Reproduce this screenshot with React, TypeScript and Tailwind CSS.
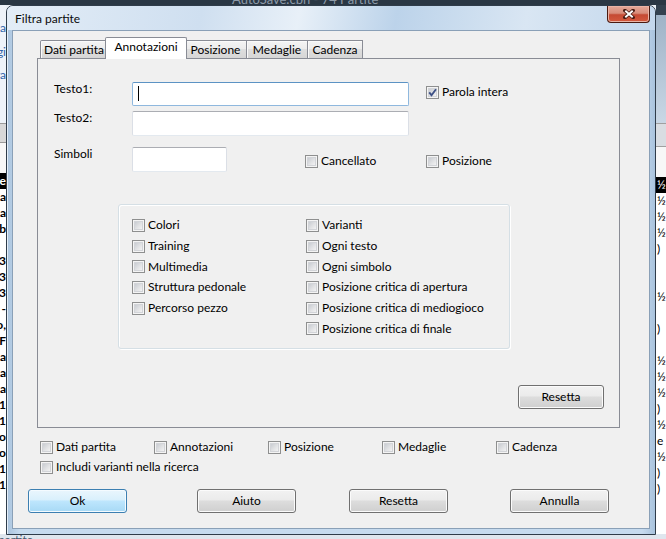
import React from 'react'

const leftChars = ['e', 'a', 'a', 'b', '', '3', '3', '3', '-', 'o,', 'F', 'a', 'a', 'a', '1', '1', 'o', 'o', '1', '1', '', '']
const rightChars = ['½', '½', '½', '½', ')', '', '', '½', '', ')', '', '½', '½', '½', ')', '½', 'e', '½', ')', ')', '', '']

function Box({ checked }: { checked?: boolean }) {
  return (
    <span className="flex w-[13px] h-[13px] shrink-0 border border-[#8e8f8f] bg-[#f4f4f4] p-[1px]">
      <span className="relative flex-1 bg-[linear-gradient(135deg,#c3c7cd,#e2e3e5_55%,#f7f7f7)] shadow-[inset_0_0_0_1px_#d2d4d8]">
        {checked && (
          <svg viewBox="0 0 9 9" className="absolute inset-0 w-full h-full overflow-visible">
            <path d="M1.2 4.4 L3.5 7.2 L8 1.2" fill="none" stroke="#3e5186" strokeWidth="1.9" />
          </svg>
        )}
      </span>
    </span>
  )
}

function Check({ label, checked, className = '' }: { label: string; checked?: boolean; className?: string }) {
  return (
    <div className={'flex items-center gap-[3px] ' + className}>
      <Box checked={checked} />
      <span className="leading-[16px] whitespace-nowrap">{label}</span>
    </div>
  )
}

function Btn({ label, w, main }: { label: string; w: string; main?: boolean }) {
  const look = main
    ? 'border-[#3c7fb1] bg-[linear-gradient(#eaf6fd,#d9f0fc_45%,#bee6fd_50%,#a7d9f5)] shadow-[inset_0_0_0_1px_#f4fbff]'
    : 'border-[#707070] bg-[linear-gradient(#f2f2f2,#ebebeb_45%,#dddddd_50%,#cfcfcf)] shadow-[inset_0_0_0_1px_#fbfbfb]'
  return (
    <div className={'flex h-[24px] items-center justify-center rounded-[3px] border ' + look + ' ' + w}>
      <span className="leading-[16px]">{label}</span>
    </div>
  )
}

function Field({ w, h, focus }: { w: string; h: string; focus?: boolean }) {
  const look = focus
    ? 'border-[#8fb8de] border-t-[#5c93c4]'
    : 'border-[#dbdfe6] border-t-[#abadb3] border-b-[#e3e9ef]'
  return (
    <div className={'relative shrink-0 rounded-[2px] border bg-white ' + look + ' ' + w + ' ' + h}>
      {focus && <span className="absolute left-[5px] top-[3px] h-[15px] w-px bg-black" />}
    </div>
  )
}

function Tab({ label, w, active, first }: { label: string; w: string; active?: boolean; first?: boolean }) {
  if (active) {
    return (
      <div className={'relative z-10 -mb-px -ml-[3px] -mr-[2px] flex h-[22px] items-start justify-center rounded-t-[2px] border border-b-0 border-[#898c95] bg-white pt-[1px] ' + w}>
        <span className="leading-[16px]">{label}</span>
      </div>
    )
  }
  return (
    <div
      className={
        'flex h-[18px] items-center justify-center border-t border-r border-[#898c95] bg-[linear-gradient(#f4f4f4,#ebebeb_50%,#dedede_50%,#d6d6d6)] shadow-[inset_1px_1px_0_#fafafa] ' +
        (first ? 'border-l rounded-tl-[2px] ' : '') +
        w
      }
    >
      <span className="leading-[16px]">{label}</span>
    </div>
  )
}

export default function App() {
  return (
    <div className="relative h-[539px] w-[666px] overflow-hidden bg-[#e9eef4] font-['Lato',sans-serif] text-[12px] text-black">
      {/* application behind the dialog */}
      <div className="flex h-full flex-col">
        <div className="h-[5px] overflow-hidden bg-[#2a3744]">
          <span className="ml-[232px] -mt-[10px] block whitespace-nowrap text-[13px] text-[#8d9aa8]">AutoSave.cbh - 74 Partite</span>
        </div>
        <div className="flex flex-1">
          <div className="flex w-[6px] flex-col bg-white text-[12px]">
            <div className="flex h-[118px] flex-col items-end overflow-hidden bg-[#eef3f9] pt-[15px] text-[#2d62a8]">
              <div className="flex h-[24px] w-full justify-end overflow-hidden leading-[16px]"><span>Ricerca</span></div>
              <div className="flex h-[23px] w-full justify-end overflow-hidden leading-[16px]"><span>Aggiungi in</span></div>
              <div className="flex h-[20px] w-full justify-end overflow-hidden leading-[16px]"><span>Filtra ap</span></div>
            </div>
            <div className="h-[20px] border-y border-[#9a9a9a] bg-[#d8d8d8]" />
            <div className="h-[30px] bg-[#f7f7f7]" />
            {leftChars.map((c, i) => (
              <div key={i} className={'flex h-[16px] w-full justify-end overflow-hidden font-bold font-[\'Liberation_Sans\',sans-serif] leading-[16px] ' + (i === 0 ? 'bg-black text-white' : 'text-black')}>
                <span>{c}</span>
              </div>
            ))}
          </div>
          <div className="flex-1" />
          <div className="flex w-[10px] flex-col bg-white">
            <div className="h-[10px] bg-[#33414f]" />
            <div className="h-[108px] bg-[linear-gradient(#9fb3c7,#c9d7e5)]" />
            <div className="h-[24px] border-y border-[#a0a0a0] bg-[#d9dde2]" />
            <div className="h-[30px] bg-[#f7f7f7]" />
            {rightChars.map((c, i) => (
              <div key={i} className={'h-[16px] overflow-hidden whitespace-nowrap pl-[1px] font-[\'Liberation_Sans\',sans-serif] text-[12px] leading-[16px] ' + (i === 0 ? 'bg-black text-white' : 'text-black')}>
                {c}
              </div>
            ))}
          </div>
        </div>
        <div className="h-[5px] overflow-hidden bg-[#dfe6ee]">
          <span className="ml-[-2px] block whitespace-nowrap text-[12px] leading-[12px] text-[#4a5b70]">partite</span>
        </div>
      </div>

      {/* dialog window */}
      <div className="absolute left-[6px] top-[5px] flex h-[530px] w-[650px] flex-col rounded-t-[7px] border border-[#2f3c4a] bg-[linear-gradient(90deg,#a9c3dd,#c6dbef_2%,#c6dbef_98%,#a9c3dd)] px-[5px] pb-[5px] shadow-[inset_1px_1px_0_#e4eef8]">
        <div className="flex h-[24px] items-start bg-[linear-gradient(100deg,#e3edf7,#cfdff0_30%,#e8f0f8_45%,#bcd3ea_60%,#d9e6f3_80%,#c3d7ec)] -mx-[5px] rounded-t-[6px] pl-[8px] pr-[5px]">
          <span className="mt-[5px] leading-[16px] text-[#0b0b0b]">Filtra partite</span>
          <div className="ml-auto flex h-[17px] w-[43px] items-center justify-center rounded-b-[4px] border border-t-0 border-[#4a1a10] bg-[linear-gradient(#e5a899,#d88c79_45%,#c54a33_55%,#d4593e)] shadow-[inset_0_0_0_1px_#eab3a5]">
            <svg width="12" height="10" viewBox="0 0 12 10">
              <path d="M2 1.5 L10 8.5 M10 1.5 L2 8.5" stroke="#4b1d14" strokeWidth="3.6" strokeLinecap="square" />
              <path d="M2.3 1.8 L9.7 8.2 M9.7 1.8 L2.3 8.2" stroke="#ffffff" strokeWidth="1.9" />
            </svg>
          </div>
        </div>

        <div className="flex flex-1 flex-col border border-[#8aa0b7] bg-[#f0f0f0]">
          {/* tab headers */}
          <div className="ml-[27px] mt-[6px] flex h-[21px] items-end">
            <Tab label="Dati partita" w="w-[68px]" first />
            <Tab label="Annotazioni" w="w-[82px]" active />
            <Tab label="Posizione" w="w-[62px]" />
            <Tab label="Medaglie" w="w-[61px]" />
            <Tab label="Cadenza" w="w-[55px]" />
          </div>

          {/* tab panel */}
          <div className="ml-[24px] flex h-[370px] w-[583px] flex-col border border-[#898c95] bg-[#f0f0f0] pl-[16px] pr-[15px] pt-[23px] pb-[18px]">
            <div className="flex items-start">
              <span className="-mt-px w-[78px] leading-[16px]">Testo1:</span>
              <Field w="w-[277px]" h="h-[24px]" focus />
              <Check label="Parola intera" checked className="ml-[17px] mt-[2px]" />
            </div>
            <div className="mt-[5px] flex items-start">
              <span className="-mt-px w-[78px] leading-[16px]">Testo2:</span>
              <Field w="w-[277px]" h="h-[25px]" />
            </div>
            <div className="mt-[11px] flex items-start">
              <span className="-mt-px w-[78px] leading-[16px]">Simboli</span>
              <Field w="w-[95px]" h="h-[25px]" />
              <Check label="Cancellato" className="ml-[78px] mt-[6px] w-[121px]" />
              <Check label="Posizione" className="mt-[6px]" />
            </div>

            <div className="ml-[64px] mt-[32px] flex h-[145px] w-[392px] rounded-[3px] border border-[#d5dfe5] pl-[13px] pt-[10px] shadow-[inset_1px_1px_0_#ffffff,1px_1px_0_#ffffff]">
              <div className="flex w-[174px] flex-col">
                {['Colori', 'Training', 'Multimedia', 'Struttura pedonale', 'Percorso pezzo'].map((t) => (
                  <div key={t} className="flex h-[20.7px] items-center">
                    <Check label={t} />
                  </div>
                ))}
              </div>
              <div className="flex flex-col">
                {[
                  'Varianti',
                  'Ogni testo',
                  'Ogni simbolo',
                  'Posizione critica di apertura',
                  'Posizione critica di mediogioco',
                  'Posizione critica di finale',
                ].map((t) => (
                  <div key={t} className="flex h-[20.7px] items-center">
                    <Check label={t} />
                  </div>
                ))}
              </div>
            </div>

            <div className="mt-auto flex justify-end">
              <Btn label="Resetta" w="w-[86px]" />
            </div>
          </div>

          {/* include checkboxes */}
          <div className="ml-[27px] mt-[11px] flex">
            <Check label="Dati partita" className="w-[114px]" />
            <Check label="Annotazioni" className="w-[114px]" />
            <Check label="Posizione" className="w-[114px]" />
            <Check label="Medaglie" className="w-[114px]" />
            <Check label="Cadenza" />
          </div>
          <Check label="Includi varianti nella ricerca" className="ml-[27px] mt-[4px]" />

          {/* dialog buttons */}
          <div className="ml-[15px] mt-[14px] flex">
            <Btn label="Ok" w="w-[99px]" main />
            <div className="ml-[70px]"><Btn label="Aiuto" w="w-[99px]" /></div>
            <div className="ml-[53px]"><Btn label="Resetta" w="w-[99px]" /></div>
            <div className="ml-[62px]"><Btn label="Annulla" w="w-[99px]" /></div>
          </div>
        </div>
      </div>
    </div>
  )
}
